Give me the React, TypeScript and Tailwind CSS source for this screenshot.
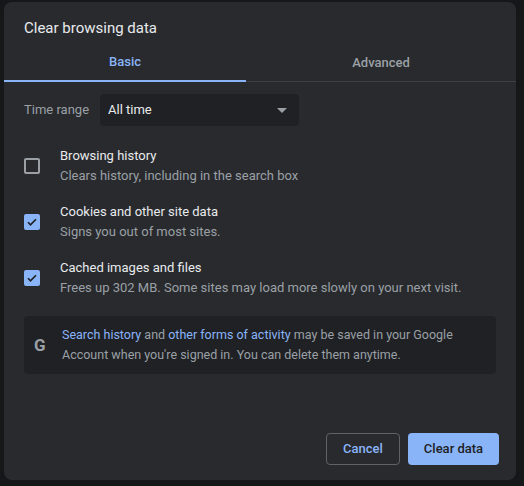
import React from "react";

const Check = ({ checked }: { checked: boolean }) =>
  checked ? (
    <div className="w-4 h-4 rounded-[2px] bg-[#8ab4f8] flex items-center justify-center">
      <svg width="12" height="12" viewBox="0 0 24 24" fill="none" stroke="#202124" strokeWidth="3.5">
        <path d="M4 12.5l5 5L20 6.5" />
      </svg>
    </div>
  ) : (
    <div className="w-4 h-4 rounded-[2px] border-2 border-[#9aa0a6]" />
  );

const items = [
  { t: "Browsing history", s: "Clears history, including in the search box", c: false },
  { t: "Cookies and other site data", s: "Signs you out of most sites.", c: true },
  { t: "Cached images and files", s: "Frees up 302 MB. Some sites may load more slowly on your next visit.", c: true },
];

export default function App() {
  return (
    <div className="w-[524px] h-[486px] bg-[#161718] pt-[2px] pl-1 font-[Roboto,sans-serif]">
      <div className="w-[512px] h-[478px] bg-[#292a2d] rounded-lg flex flex-col">
        <div className="pl-5 pt-[16px] text-[15px] leading-5 text-[#e8eaed]">Clear browsing data</div>
        <div className="flex mt-[6px] border-b border-[#3c4043] h-[38px] text-[13px] font-medium">
          <div className="w-[242px] flex items-center justify-center text-[#8ab4f8] border-b-2 border-[#8ab4f8] -mb-px">Basic</div>
          <div className="flex-1 flex items-center justify-center text-[#9aa0a6]">Advanced</div>
        </div>
        <div className="flex items-center mt-3 pl-5 text-[13px]">
          <span className="text-[#9aa0a6] w-[76px]">Time range</span>
          <div className="w-[199px] h-8 bg-[#202124] rounded flex items-center justify-between px-2 text-[#e8eaed]">
            <span>All time</span>
            <svg width="10" height="5" viewBox="0 0 10 5" className="mr-1"><path d="M0 0h10L5 5z" fill="#9aa0a6" /></svg>
          </div>
        </div>
        <div className="flex flex-col mt-[20px] pl-5 gap-4">
          {items.map((i) => (
            <div key={i.t} className="flex items-center">
              <div className="w-9"><Check checked={i.c} /></div>
              <div className="text-[13px] leading-5">
                <div className="text-[#e8eaed]">{i.t}</div>
                <div className="text-[#9aa0a6]">{i.s}</div>
              </div>
            </div>
          ))}
        </div>
        <div className="mx-5 mt-[18px] h-[58px] bg-[#202124] rounded flex items-center text-[12.5px] leading-5 text-[#9aa0a6]">
          <div className="w-[38px] pl-[10px] text-[#9aa0a6] text-[17px] font-bold">G</div>
          <div>
            <span className="text-[#8ab4f8]">Search history</span> and{" "}
            <span className="text-[#8ab4f8]">other forms of activity</span> may be saved in your Google
            <br />
            Account when you're signed in. You can delete them anytime.
          </div>
        </div>
        <div className="mt-auto mb-[15px] mr-[17px] flex justify-end gap-2 text-[13px] font-medium">
          <button className="w-[74px] h-8 rounded border border-[#5f6368] text-[#8ab4f8]">Cancel</button>
          <button className="w-[91px] h-8 rounded bg-[#8ab4f8] text-[#202124]">Clear data</button>
        </div>
      </div>
    </div>
  );
}
